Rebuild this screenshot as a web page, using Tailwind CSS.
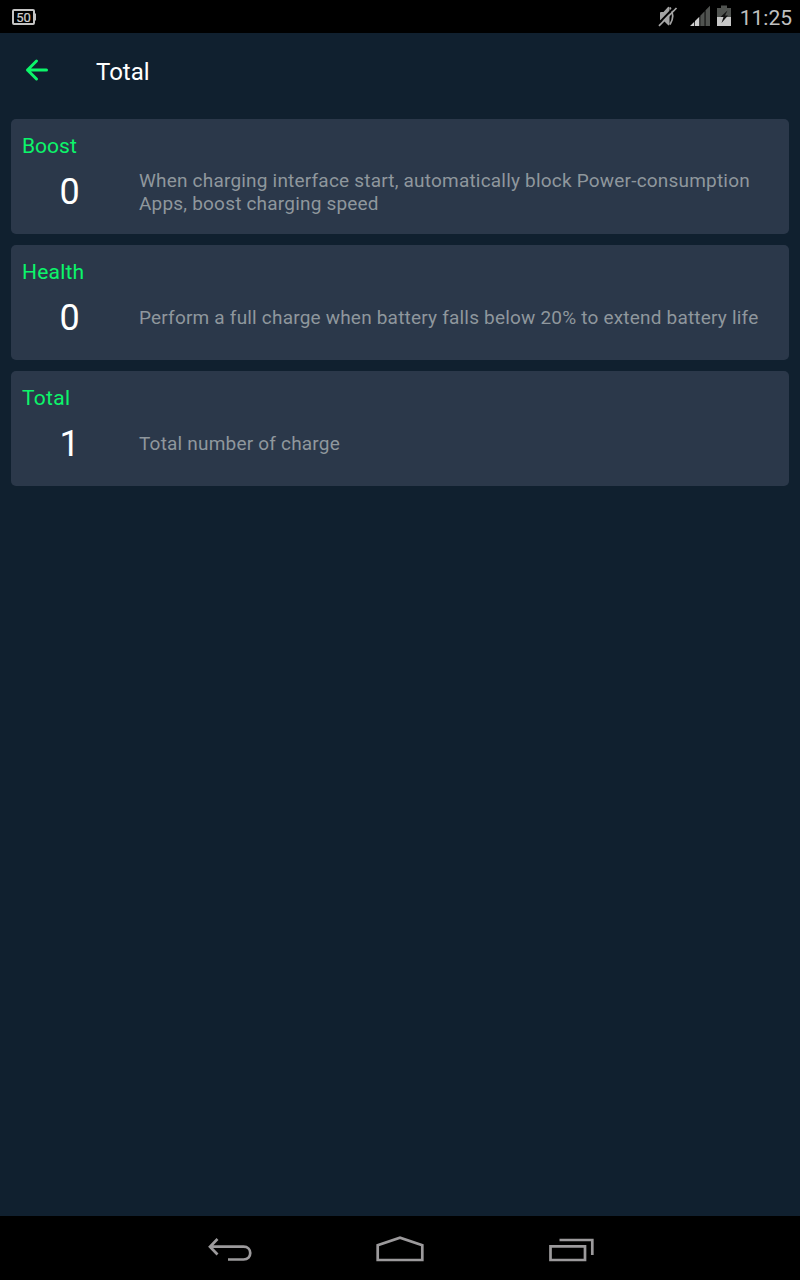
<!DOCTYPE html>
<html lang="en">
<head>
<meta charset="utf-8">
<title>Total</title>
<script src="https://cdn.jsdelivr.net/npm/@tailwindcss/browser@4"></script>
</head>
<body class="flex h-[1280px] w-[800px] flex-col overflow-hidden bg-[#10202f] font-['Roboto',sans-serif]">
  <div class="flex h-[33px] shrink-0 items-center justify-between bg-black pl-3 pr-2">
    <svg class="h-[33px] w-[26px]" viewBox="0 0 26 33">
      <rect x="1" y="10" width="21" height="14" rx="1" fill="none" stroke="#c4c4c4" stroke-width="2"/>
      <rect x="22" y="13.500" width="2" height="7" fill="#c4c4c4"/>
      <text x="11.500" y="21.500" text-anchor="middle" font-size="13" font-family="Roboto, sans-serif" fill="#d0d0d0" stroke="#d0d0d0" stroke-width="0.200">50</text>
    </svg>
    <div class="flex items-center">
      <svg class="h-[33px] w-[84px]" viewBox="656 0 84 33">
        <path d="M660 13q0-1 1-1h2.500l4.500-5q1-.8 1.500.5v17q-.5 1.500-1.500.5l-4.500-4.500h-2.500q-1 0-1-1z" fill="#a4a4a4"/>
        <path d="M670 7.500q5.500 8.500 0 17" fill="none" stroke="#a4a4a4" stroke-width="1.700"/>
        <path d="M658 24L674.500 7" stroke="#000" stroke-width="1.800"/>
        <path d="M659 25.800L676.500 8" stroke="#a8a8a8" stroke-width="1.700"/>
        <path d="M690 26l4.300-4.300v4.300z M695 21l4.300-4.300v9.300h-4.300z" fill="#d0d0d0"/>
        <path d="M700.300 15.700l4.300-4.400v14.700h-4.300z M705.500 10.300l4.500-4.500v20.200h-4.500z" fill="#505350"/>
        <path d="M717 8h4v-2.500h6v2.500h4v9h-14z" fill="#505350"/>
        <path d="M717 17h14v9h-14z" fill="#c8c8c8"/>
        <path d="M727.500 10.500l-7 6.500h3l-2 6 6.500-7.500h-3z" fill="#111"/>
      </svg>
      <span class="mt-0.5 text-[21px] leading-6 text-[#c0c0c0]">11:25</span>
    </div>
  </div>
  <header class="flex h-[75px] shrink-0 items-center pl-[25px]">
    <svg class="mb-0.5 h-6 w-6" viewBox="0 0 24 24" fill="none" stroke="#0cf56a" stroke-width="3" stroke-linecap="round" stroke-linejoin="round">
      <path d="M11.500 3L2.500 12L11.500 21M2.500 12H21.500"/>
    </svg>
    <h1 class="ml-[47px] mt-0.5 text-[24px] leading-7 text-white">Total</h1>
  </header>
  <main class="flex flex-1 flex-col gap-[11px] px-[11px] pt-[11px]">
    <section class="h-[115px] rounded-[5px] bg-[#2b384a] pt-[14px]">
      <h2 class="pl-[11px] text-[21px] leading-[26px] text-[#0cf56a]">Boost</h2>
      <div class="flex h-[66px] items-center">
        <span class="w-[117px] text-center text-[36px] leading-10 text-white">0</span>
        <p class="ml-[11px] w-[640px] text-[19px] leading-[23px] tracking-[0.2px] text-[#8f979d]">When charging interface start, automatically block Power-consumption<br>Apps, boost charging speed</p>
      </div>
    </section>
    <section class="h-[115px] rounded-[5px] bg-[#2b384a] pt-[14px]">
      <h2 class="pl-[11px] text-[21px] leading-[26px] tracking-[0.2px] text-[#0cf56a]">Health</h2>
      <div class="flex h-[66px] items-center">
        <span class="w-[117px] text-center text-[36px] leading-10 text-white">0</span>
        <p class="mb-0.5 ml-[11px] w-[640px] text-[19px] leading-[23px] tracking-[0.2px] text-[#8f979d]">Perform a full charge when battery falls below 20% to extend battery life</p>
      </div>
    </section>
    <section class="h-[115px] rounded-[5px] bg-[#2b384a] pt-[14px]">
      <h2 class="pl-[11px] text-[21px] leading-[26px] tracking-[0.3px] text-[#0cf56a]">Total</h2>
      <div class="flex h-[66px] items-center">
        <span class="w-[117px] text-center text-[36px] leading-10 text-white">1</span>
        <p class="mb-0.5 ml-[11px] w-[640px] text-[19px] leading-[23px] tracking-[0.2px] text-[#8f979d]">Total number of charge</p>
      </div>
    </section>
  </main>
  <nav class="h-16 shrink-0 bg-black">
    <svg class="h-16 w-[800px]" viewBox="0 1216 800 64" fill="none" stroke="#9c9a9c" stroke-width="2.700">
      <path d="M217.500 1239L210 1246.700L217.500 1254.500M210 1246.700H243.500C252.500 1246.700 252.500 1259.500 243.500 1259.500H228"/>
      <path d="M377.700 1260V1245.300L400 1237.700L422.300 1245.300V1260Z"/>
      <path d="M550.500 1246.300H585V1260H550.500ZM559.500 1240H592.300V1255"/>
    </svg>
  </nav>
</body>
</html>
